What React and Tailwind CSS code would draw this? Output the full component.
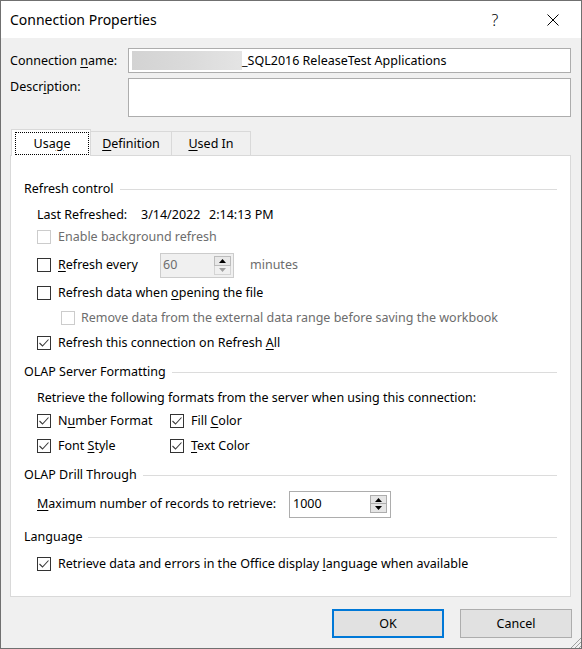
import React from "react";

const U = ({ children }) => (
  <span className="underline decoration-1 underline-offset-[2px]">{children}</span>
);

function Check({ checked = false, disabled = false }) {
  return (
    <span
      className={
        disabled
          ? "w-[14px] h-[14px] border border-[#cccccc] bg-white flex items-center justify-center shrink-0"
          : "w-[14px] h-[14px] border border-[#333333] bg-white flex items-center justify-center shrink-0"
      }
    >
      {checked && (
        <svg width="12" height="12" viewBox="0 0 12 12">
          <polyline points="1.5,6 4.5,9 10.5,2.5" fill="none" stroke="#3a3a3a" strokeWidth="1.1" />
        </svg>
      )}
    </span>
  );
}

function SpinBtns({ disabled = false }) {
  return (
    <div className="flex flex-col w-[17px] shrink-0">
      <div
        className={
          disabled
            ? "h-[10px] border border-[#bcbcbc] bg-[#e8e8e8] flex items-center justify-center"
            : "h-[9px] border border-[#adadad] bg-[#e5e5e5] flex items-center justify-center"
        }
      >
        <svg width="7" height="4" viewBox="0 0 7 4">
          <polygon points="0,4 7,4 3.5,0" fill="#000" />
        </svg>
      </div>
      <div
        className={
          disabled
            ? "h-[9px] border border-t-0 border-[#d4d4d4] bg-[#f0f0f0] flex items-center justify-center"
            : "h-[9px] border border-t-0 border-[#adadad] bg-[#e5e5e5] flex items-center justify-center"
        }
      >
        <svg width="7" height="4" viewBox="0 0 7 4">
          <polygon points="0,0 7,0 3.5,4" fill={disabled ? "#a0a0a0" : "#000"} />
        </svg>
      </div>
    </div>
  );
}

function Section({ title, className }) {
  return (
    <div className={"flex items-center h-[20px] pl-[13px] pr-[13px] " + className}>
      <span>{title}</span>
      <span className="flex-1 h-px bg-[#dcdcdc] ml-[6px]" />
    </div>
  );
}

export default function App() {
  return (
    <div className="relative w-[582px] h-[649px] border border-[#707070] flex flex-col bg-[#f0f0f0] text-[12.5px] text-black leading-[16px] font-['Noto_Sans',sans-serif] overflow-hidden">
      {/* Title bar */}
      <div className="h-[37px] bg-white flex items-center pl-[9px] shrink-0">
        <span className="text-[14px] leading-[20px]">Connection Properties</span>
        <div className="ml-auto flex items-center pr-[5px]">
          <span className="w-[46px] text-center text-[16px] font-light">?</span>
          <span className="w-[46px] ml-[12px] flex items-center justify-center">
            <svg width="12" height="12" viewBox="0 0 12 12">
              <line x1="0.5" y1="0.5" x2="11.5" y2="11.5" stroke="#000" strokeWidth="1" />
              <line x1="11.5" y1="0.5" x2="0.5" y2="11.5" stroke="#000" strokeWidth="1" />
            </svg>
          </span>
        </div>
      </div>

      {/* Body */}
      <div className="flex-1 flex flex-col pl-[9px] pr-[9px]">
        <div className="flex items-center mt-[10px]">
          <span className="w-[118px]">
            Connection <U>n</U>ame:
          </span>
          <div className="w-[443px] h-[25px] bg-white border border-[#adadad] flex items-center pl-[3px]">
            <span className="w-[110px] h-[19px] bg-gradient-to-r from-[#d3d3d3] via-[#dadada] to-[#e4e4e4]" />
            <span>_SQL2016 ReleaseTest Applications</span>
          </div>
        </div>
        <div className="flex items-start mt-[5px]">
          <span className="w-[118px] pt-[1px]">
            Descr<U>i</U>ption:
          </span>
          <div className="w-[443px] h-[39px] bg-white border border-[#adadad]" />
        </div>

        {/* Tabs */}
        <div className="flex items-end h-[26px] mt-[12px] pl-[1px]">
          <div className="relative z-10 w-[80px] h-[27px] -mb-px bg-white border border-b-0 border-[#d9d9d9] pl-[3px] pt-[2px]">
            <div className="w-[74px] h-[23px] border border-dotted border-black flex items-center justify-center">
              <span>
                Usa<U>g</U>e
              </span>
            </div>
          </div>
          <div className="w-[82px] h-[24px] -ml-px bg-[#f0f0f0] border border-b-0 border-[#d9d9d9] flex items-center justify-center">
            <span>
              <U>D</U>efinition
            </span>
          </div>
          <div className="w-[80px] h-[24px] -ml-px bg-[#f0f0f0] border border-b-0 border-[#d9d9d9] flex items-center justify-center">
            <span>
              <U>U</U>sed In
            </span>
          </div>
        </div>

        {/* Panel */}
        <div className="w-[561px] h-[442px] bg-white border border-[#d9d9d9] flex flex-col pt-[23px]">
          <Section title="Refresh control" className="" />

          <div className="flex items-center h-[20px] mt-[6px] pl-[26px]">
            <span className="w-[104px]">Last Refreshed:</span>
            <span className="w-[68px]">3/14/2022</span>
            <span>2:14:13 PM</span>
          </div>

          <div className="flex items-center h-[20px] mt-[2px] pl-[26px] text-[#6d6d6d]">
            <Check disabled />
            <span className="ml-[7px]">Enable background refresh</span>
          </div>

          <div className="flex items-center h-[20px] mt-[8px] pl-[26px]">
            <Check />
            <span className="ml-[7px] w-[102px]">
              <U>R</U>efresh every
            </span>
            <div className="w-[74px] h-[25px] border border-[#cccccc] bg-[#f0f0f0] flex items-center pl-[2px] pr-[2px] shrink-0">
              <span className="flex-1 text-[#6d6d6d]">60</span>
              <SpinBtns disabled />
            </div>
            <span className="ml-[16px] text-[#6d6d6d]">minutes</span>
          </div>

          <div className="flex items-center h-[20px] mt-[8px] pl-[26px]">
            <Check />
            <span className="ml-[7px]">
              Refresh data when <U>o</U>pening the file
            </span>
          </div>

          <div className="flex items-center h-[20px] mt-[5px] pl-[50px] text-[#6d6d6d]">
            <Check disabled />
            <span className="ml-[6px]">Remove data from the external data range before saving the workbook</span>
          </div>

          <div className="flex items-center h-[20px] mt-[5px] pl-[26px]">
            <Check checked />
            <span className="ml-[7px]">
              Refresh this connection on Refresh <U>A</U>ll
            </span>
          </div>

          <Section title="OLAP Server Formatting" className="mt-[9px]" />

          <div className="flex items-center h-[20px] mt-[6px] pl-[26px]">
            <span>Retrieve the following formats from the server when using this connection:</span>
          </div>

          <div className="flex items-center h-[20px] mt-[3px] pl-[26px]">
            <div className="flex items-center w-[133px]">
              <Check checked />
              <span className="ml-[7px]">
                N<U>u</U>mber Format
              </span>
            </div>
            <Check checked />
            <span className="ml-[7px]">
              Fill <U>C</U>olor
            </span>
          </div>

          <div className="flex items-center h-[20px] mt-[5px] pl-[26px]">
            <div className="flex items-center w-[133px]">
              <Check checked />
              <span className="ml-[7px]">
                Font <U>S</U>tyle
              </span>
            </div>
            <Check checked />
            <span className="ml-[7px]">
              <U>T</U>ext Color
            </span>
          </div>

          <Section title="OLAP Drill Through" className="mt-[9px]" />

          <div className="flex items-center h-[20px] mt-[9px] pl-[26px]">
            <span className="w-[252px]">
              <U>M</U>aximum number of records to retrieve:
            </span>
            <div className="w-[102px] h-[27px] border border-[#adadad] bg-white flex items-center pl-[3px] pr-[3px] shrink-0">
              <span className="flex-1">1000</span>
              <SpinBtns />
            </div>
          </div>

          <Section title="Language" className="mt-[13px]" />

          <div className="flex items-center h-[20px] mt-[7px] pl-[26px]">
            <Check checked />
            <span className="ml-[7px]">
              Retrieve data and errors in the Office display <U>l</U>anguage when available
            </span>
          </div>
        </div>

        {/* Buttons */}
        <div className="flex justify-end gap-[16px] mt-[12px]">
          <div className="w-[112px] h-[29px] bg-[#e1e1e1] border-2 border-[#0078d7] flex items-center justify-center">
            OK
          </div>
          <div className="w-[112px] h-[29px] bg-[#e1e1e1] border border-[#adadad] flex items-center justify-center">
            Cancel
          </div>
        </div>
      </div>

      {/* Resize grip */}
      <svg className="absolute right-0 bottom-0" width="12" height="12" viewBox="0 0 12 12">
        <line x1="12" y1="2" x2="2" y2="12" stroke="#a0a0a0" strokeWidth="1" />
        <line x1="12" y1="6" x2="6" y2="12" stroke="#a0a0a0" strokeWidth="1" />
        <line x1="12" y1="10" x2="10" y2="12" stroke="#a0a0a0" strokeWidth="1" />
      </svg>
    </div>
  );
}
